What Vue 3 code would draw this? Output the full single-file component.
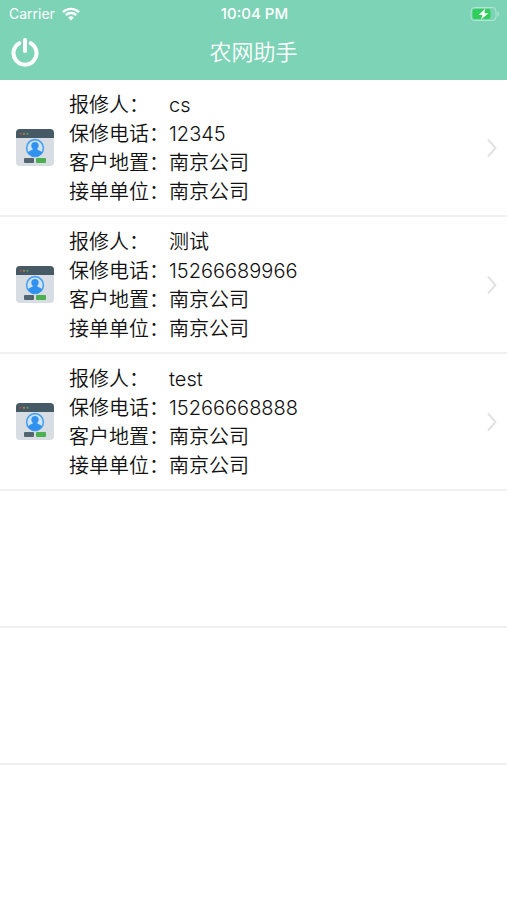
<template>
  <div class="page" lang="zh-CN">
    <header class="header">
      <div class="status-bar">
        <div class="carrier">
          <span>Carrier</span>
          <svg class="wifi" viewBox="0 0 18 14" aria-hidden="true">
            <path d="M1 5.2a11.4 11.4 0 0 1 16 0" />
            <path d="M3.8 8.2a7.4 7.4 0 0 1 10.4 0" />
            <path class="dot" d="M6.2 10.6a4 4 0 0 1 5.6 0L9 13.6z" />
          </svg>
        </div>
        <span class="time">10:04 PM</span>
        <svg class="battery" viewBox="0 0 30 16" aria-hidden="true">
          <rect class="shell" x="1" y="1.5" width="25" height="13" rx="3.5" />
          <rect class="level" x="2.5" y="3" width="18" height="10" rx="2" />
          <path class="tip" d="M27.5 5.5v5a2.8 2.8 0 0 0 0-5z" />
          <path class="bolt" d="M15.5 2.5L8.5 9h4L11 13.500 18.500 7.200h-4.200z" />
        </svg>
      </div>
      <div class="nav-bar">
        <button class="power" type="button" aria-label="退出" @click="logout">
          <svg viewBox="0 0 28 30" aria-hidden="true">
            <path d="M8.3 6.2a11.5 11.5 0 1 0 11.4 0" />
            <path d="M14 3v11" />
          </svg>
        </button>
        <h1 class="title">农网助手</h1>
      </div>
    </header>

    <ul class="list">
      <li v-for="order in orders" :key="order.id" class="row">
        <a class="order" href="#">
          <svg class="order-icon" viewBox="0 0 38 38" aria-hidden="true">
            <rect width="38" height="37" rx="4" fill="#d7dde2" />
            <path d="M4 0h30a4 4 0 0 1 4 4v5H0V4a4 4 0 0 1 4-4z" fill="#465a65" />
            <circle cx="4.5" cy="4.8" r="1.1" fill="#a8504a" />
            <circle cx="8" cy="4.8" r="1.1" fill="#a58a45" />
            <circle cx="11.5" cy="4.8" r="1.1" fill="#5c9b58" />
            <circle cx="19" cy="19" r="8.4" fill="#cfe3f5" stroke="#48a0f0" stroke-width="1.6" />
            <path d="M12 24c.4-2 2.600-2.600 4.600-3.300v-1.200c-2-1.600-2-6.500 2.400-6.500s4.400 4.900 2.400 6.500v1.200c2 .7 4.200 1.300 4.600 3.300a8.600 8.600 0 0 1-14 0z" fill="#3091ee" />
            <rect x="8" y="29" width="10" height="5" rx="1" fill="#526570" />
            <rect x="20" y="29" width="10" height="5" rx="1" fill="#4caf50" />
          </svg>
          <dl class="fields">
            <div v-for="field in fields" :key="field.key" class="field">
              <dt>{{ field.label }}：</dt>
              <dd>{{ order[field.key] }}</dd>
            </div>
          </dl>
          <svg class="arrow" viewBox="0 0 10 20" aria-hidden="true">
            <path d="M1 1.5l7.5 8.5L1 18.5" />
          </svg>
        </a>
      </li>
      <li v-for="n in 2" :key="'blank' + n" class="row"></li>
    </ul>
  </div>
</template>

<script setup>
import { ref } from 'vue'

const fields = [
  { key: 'name', label: '报修人' },
  { key: 'phone', label: '保修电话' },
  { key: 'address', label: '客户地置' },
  { key: 'company', label: '接单单位' }
]

const orders = ref([
  { id: 1, name: 'cs', phone: '12345', address: '南京公司', company: '南京公司' },
  { id: 2, name: '测试', phone: '15266689966', address: '南京公司', company: '南京公司' },
  { id: 3, name: 'test', phone: '15266668888', address: '南京公司', company: '南京公司' }
])

const logout = () => {
  orders.value = []
}
</script>

<style>
body {
  margin: 0;
  background: #fff;
}
</style>

<style scoped>
.page {
  min-height: 100vh;
  font-family: Inter, "Noto Sans CJK SC", sans-serif;
  color: #111;
}

.header {
  background: #7dd3b6;
  color: #fff;
}

.status-bar {
  display: grid;
  grid-template-columns: 1fr auto 1fr;
  align-items: center;
  height: 27px;
  padding: 0 7px 0 9px;
  font-size: 14px;
}

.carrier {
  display: flex;
  align-items: center;
  gap: 7px;
}

.wifi {
  width: 18px;
  height: 14px;
  fill: none;
  stroke: #fff;
  stroke-width: 2.4;
}

.wifi .dot {
  fill: #fff;
  stroke: none;
}

.time {
  font-size: 15px;
  font-weight: 500;
}

.battery {
  justify-self: end;
  width: 30px;
  height: 16px;
}

.shell {
  fill: none;
  stroke: #b5e6d5;
}

.level {
  fill: #30cf5b;
}

.tip {
  fill: #b5e6d5;
}

.bolt {
  fill: #fff;
}

.nav-bar {
  display: grid;
  grid-template-columns: 1fr auto 1fr;
  align-items: center;
  height: 53px;
  padding: 0 11px;
}

.power {
  display: flex;
  justify-self: start;
  padding: 0 0 4px;
  border: 0;
  background: none;
  cursor: pointer;
}

.power svg {
  width: 28px;
  height: 30px;
  fill: none;
  stroke: #fff;
  stroke-width: 4;
  stroke-linecap: round;
}

.title {
  margin: 0;
  padding-bottom: 4px;
  font-size: 22px;
  font-weight: 350;
  line-height: 32px;
}

.list {
  margin: 0;
  padding: 0;
  list-style: none;
}

.row {
  box-sizing: border-box;
  min-height: 137px;
  border-bottom: 2px solid #f0f0f0;
}

.order {
  display: flex;
  align-items: center;
  min-height: 135px;
  padding: 0 10px 0 16px;
  color: inherit;
  text-decoration: none;
}

.order-icon {
  flex: none;
  width: 38px;
  height: 38px;
}

.fields {
  flex: 1;
  margin: 0 0 0 15px;
  padding-top: 2px;
  font-size: 20px;
  font-weight: 350;
  line-height: 29px;
}

.field {
  display: flex;
}

.field dt {
  width: 100px;
}

.field dd {
  margin: 0;
}

.arrow {
  flex: none;
  width: 10px;
  height: 20px;
  fill: none;
  stroke: #e2e2e2;
  stroke-width: 2;
}
</style>
